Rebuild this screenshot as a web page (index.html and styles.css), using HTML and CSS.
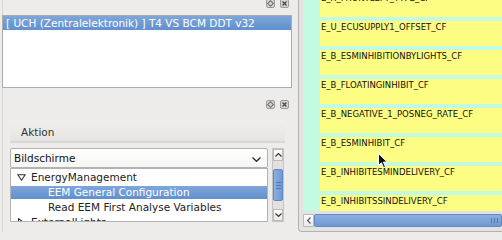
FILE: index.html
```html
<!DOCTYPE html>
<html lang="de">
<head>
  <meta charset="UTF-8">
  <title>DDT Viewer</title>
  <link rel="stylesheet" href="styles.css">
</head>
<body>

  <div class="left">
    <div class="dock-title">
      <svg class="dock-btn" viewBox="0 0 9 9"><rect x="0.5" y="0.5" width="8" height="8" rx="1.5" fill="#d9d7d5" stroke="#9b9997"/><rect x="2.5" y="2.5" width="4" height="4" fill="none" stroke="#6f6d6b" transform="rotate(45 4.5 4.5)"/></svg>
      <svg class="dock-btn" viewBox="0 0 9 9"><rect x="0.5" y="0.5" width="8" height="8" rx="1.5" fill="#d9d7d5" stroke="#9b9997"/><path d="M2.5 2.5 L6.5 6.5 M6.5 2.5 L2.5 6.5" stroke="#4a4846" stroke-width="1.3"/></svg>
    </div>
    <div class="ecu-list">
      <div class="ecu-item selected">[ UCH (Zentralelektronik) ] T4 VS BCM DDT v32</div>
    </div>

    <div class="dock-title second">
      <svg class="dock-btn" viewBox="0 0 9 9"><rect x="0.5" y="0.5" width="8" height="8" rx="1.5" fill="#d9d7d5" stroke="#9b9997"/><rect x="2.5" y="2.5" width="4" height="4" fill="none" stroke="#6f6d6b" transform="rotate(45 4.5 4.5)"/></svg>
      <svg class="dock-btn" viewBox="0 0 9 9"><rect x="0.5" y="0.5" width="8" height="8" rx="1.5" fill="#d9d7d5" stroke="#9b9997"/><path d="M2.5 2.5 L6.5 6.5 M6.5 2.5 L2.5 6.5" stroke="#4a4846" stroke-width="1.3"/></svg>
    </div>
    <div class="action-body">
      <div class="action-head">Aktion</div>
      <div class="screens">
        <div class="screens-main">
          <div class="combo">
            <span>Bildschirme</span>
            <svg class="combo-arrow" viewBox="0 0 9 5"><path d="M0.5 0.5 L4.5 4.3 L8.5 0.5" fill="none" stroke="#333" stroke-width="1.4"/></svg>
          </div>
          <div class="tree">
            <div class="tree-row">
              <svg class="twisty" viewBox="0 0 9 7"><path d="M0.8 0.8 L8.2 0.8 L4.5 6.2 Z" fill="none" stroke="#333" stroke-width="1.1"/></svg>
              EnergyManagement
            </div>
            <div class="tree-row child selected">EEM General Configuration</div>
            <div class="tree-row child">Read EEM First Analyse Variables</div>
            <div class="tree-row">
              <svg class="twisty" viewBox="0 0 9 9"><path d="M1.5 0.8 L7 4.5 L1.5 8.2 Z" fill="none" stroke="#333" stroke-width="1.1"/></svg>
              ExternalLights
            </div>
          </div>
        </div>
        <div class="vscroll">
          <div class="sb-btn"><svg viewBox="0 0 7 4"><path d="M0.5 3.5 L3.5 0.6 L6.5 3.5" fill="none" stroke="#333" stroke-width="1.2"/></svg></div>
          <div class="sb-track top"></div>
          <div class="sb-thumb">
            <span></span><span></span><span></span>
          </div>
          <div class="sb-track"></div>
          <div class="sb-btn"><svg viewBox="0 0 7 4"><path d="M0.5 0.5 L3.5 3.4 L6.5 0.5" fill="none" stroke="#333" stroke-width="1.2"/></svg></div>
        </div>
      </div>
    </div>
  </div>

  <div class="viewer">
    <div class="canvas">
      <div class="param">E_X_FRONTLEFT_TYPE_CF</div>
      <div class="param">E_U_ECUSUPPLY1_OFFSET_CF</div>
      <div class="param">E_B_ESMINHIBITIONBYLIGHTS_CF</div>
      <div class="param">E_B_FLOATINGINHIBIT_CF</div>
      <div class="param">E_B_NEGATIVE_1_POSNEG_RATE_CF</div>
      <div class="param">E_B_ESMINHIBIT_CF</div>
      <div class="param">E_B_INHIBITESMINDELIVERY_CF</div>
      <div class="param">E_B_INHIBITSSINDELIVERY_CF</div>

      <svg class="cursor" viewBox="0 0 11 16"><path d="M0.5 0.5 L0.5 12.5 L3.4 9.8 L5.6 14.8 L7.5 14 L5.4 9.1 L9.3 9.1 Z" fill="#111" stroke="#fff" stroke-width="1"/></svg>
    </div>
    <div class="hscroll">
      <div class="sb-btn"><svg viewBox="0 0 4 7"><path d="M3.5 0.5 L0.6 3.5 L3.5 6.5" fill="none" stroke="#555" stroke-width="1.1"/></svg></div>
      <div class="hthumb"><span></span><span></span><span></span></div>
    </div>
  </div>

</body>
</html>
```

FILE: styles.css
```css
body {
  margin: 0;
  width: 502px;
  height: 240px;
  overflow: hidden;
  display: flex;
  align-items: flex-start;
  background-color: #edeceb;
  font-family: "DejaVu Sans", sans-serif;
  color: #222;
}

/* left docks */

.left {
  width: 290px;
  height: 232px;
  margin-left: 2px;
  margin-right: 6px;
  border-left: 1px solid #d8d6d4;
  box-sizing: border-box;
  display: flex;
  flex-direction: column;
}

.dock-title {
  height: 15px;
  display: flex;
  justify-content: flex-end;
  align-items: flex-start;
  gap: 5px;
  padding-right: 3px;
}

.dock-title.second {
  height: 9px;
  padding-top: 12px;
}

.dock-btn {
  width: 9px;
  height: 9px;
  margin-top: -1px;
}

.second .dock-btn {
  margin-top: 0;
}

.ecu-list {
  height: 73px;
  margin-left: -1px;
  box-sizing: border-box;
  background: white;
  border: 1px solid #aeacaa;
}

.ecu-item {
  height: 14px;
  line-height: 14px;
  padding-left: 3px;
  font-size: 10.5px;
  white-space: nowrap;
}

.selected {
  background: linear-gradient(#7ea6da, #6190cd);
  color: white;
}

.action-body {
  margin-top: 11px;
  padding-left: 7px;
}

.action-head {
  width: 275px;
  height: 23px;
  box-sizing: border-box;
  padding-left: 11px;
  line-height: 25px;
  font-size: 10.5px;
  color: #333;
  background: linear-gradient(#efeeed, #e6e5e4);
  border-bottom: 2px solid #d9d7d5;
}

.screens {
  margin-top: 5px;
  display: flex;
  gap: 4px;
}

.screens-main {
  width: 258px;
}

.combo {
  height: 20px;
  box-sizing: border-box;
  display: flex;
  align-items: center;
  justify-content: space-between;
  padding: 0 6px 0 3px;
  font-size: 10.5px;
  color: #111;
  background: linear-gradient(#ffffff, #f5f5f4);
  border: 1px solid #b5b3b1;
  border-radius: 2px;
}

.combo-arrow {
  width: 9px;
  height: 5px;
  margin-top: 2px;
}

.tree {
  height: 54px;
  box-sizing: border-box;
  overflow: hidden;
  padding-top: 1px;
  background: white;
  border: 1px solid #b5b3b1;
}

.tree-row {
  flex-shrink: 0;
  height: 15px;
  line-height: 15px;
  font-size: 10.5px;
  white-space: nowrap;
  display: flex;
  align-items: center;
  padding-left: 6px;
  color: #222;
}

.tree-row.child {
  padding-left: 37px;
}

.tree-row.selected {
  color: white;
  background: linear-gradient(#7ea6da, #6190cd) center / 100% 13px no-repeat;
}

.twisty {
  width: 9px;
  height: 7px;
  margin-right: 5px;
}

.tree-row:last-child .twisty {
  height: 9px;
}

/* scrollbars */

.vscroll {
  width: 12px;
  height: 74px;
  display: flex;
  flex-direction: column;
  background: #e2e1e0;
  border: 1px solid #c6c4c2;
  box-sizing: border-box;
}

.sb-btn {
  height: 12px;
  display: flex;
  align-items: center;
  justify-content: center;
  background: linear-gradient(#fdfdfd, #ebebea);
  border: 1px solid #bdbbb9;
  box-sizing: border-box;
}

.sb-btn svg {
  width: 7px;
  height: 4px;
}

.sb-track {
  flex: 1;
}

.sb-thumb {
  height: 30px;
  display: flex;
  flex-direction: column;
  align-items: center;
  justify-content: center;
  gap: 2px;
  background: linear-gradient(90deg, #8db0e2, #6f98d3);
  border: 1px solid #5f88c4;
  border-radius: 2px;
}

.sb-thumb span {
  width: 5px;
  height: 1px;
  background: #4f77b4;
}

/* parameter viewer */

.viewer {
  width: 204px;
  height: 232px;
  box-sizing: border-box;
  padding: 0 0 4px 4px;
  border-left: 1px solid #b4b2b0;
  border-bottom: 1px solid #b4b2b0;
  border-bottom-left-radius: 4px;
  background: #e4e3e2;
}

.canvas {
  position: relative;
  height: 211px;
  overflow: hidden;
  background: #c2fbe2;
  padding-left: 17px;
}

.param {
  height: 25px;
  margin-top: 4px;
  padding: 1px 0 0 1px;
  box-sizing: border-box;
  font-size: 8.5px;
  line-height: 10px;
  white-space: nowrap;
  color: #111;
  background: #fdfd84;
}

.param:first-child {
  margin-top: -8px;
}

.cursor {
  position: absolute;
  left: 75px;
  top: 153px;
  width: 11px;
  height: 16px;
}

.hscroll {
  height: 13px;
  margin-top: 3px;
  display: flex;
  background: #e2e1e0;
}

.hscroll .sb-btn {
  width: 11px;
  height: 13px;
}

.hscroll .sb-btn svg {
  width: 4px;
  height: 7px;
}

.hthumb {
  flex: 1;
  display: flex;
  justify-content: flex-end;
  align-items: center;
  gap: 2px;
  padding-right: 3px;
  background: linear-gradient(#8db0e2, #6f98d3);
  border: 1px solid #5f88c4;
  border-radius: 2px;
}

.hthumb span {
  width: 1px;
  height: 5px;
  background: #4f77b4;
}
```
